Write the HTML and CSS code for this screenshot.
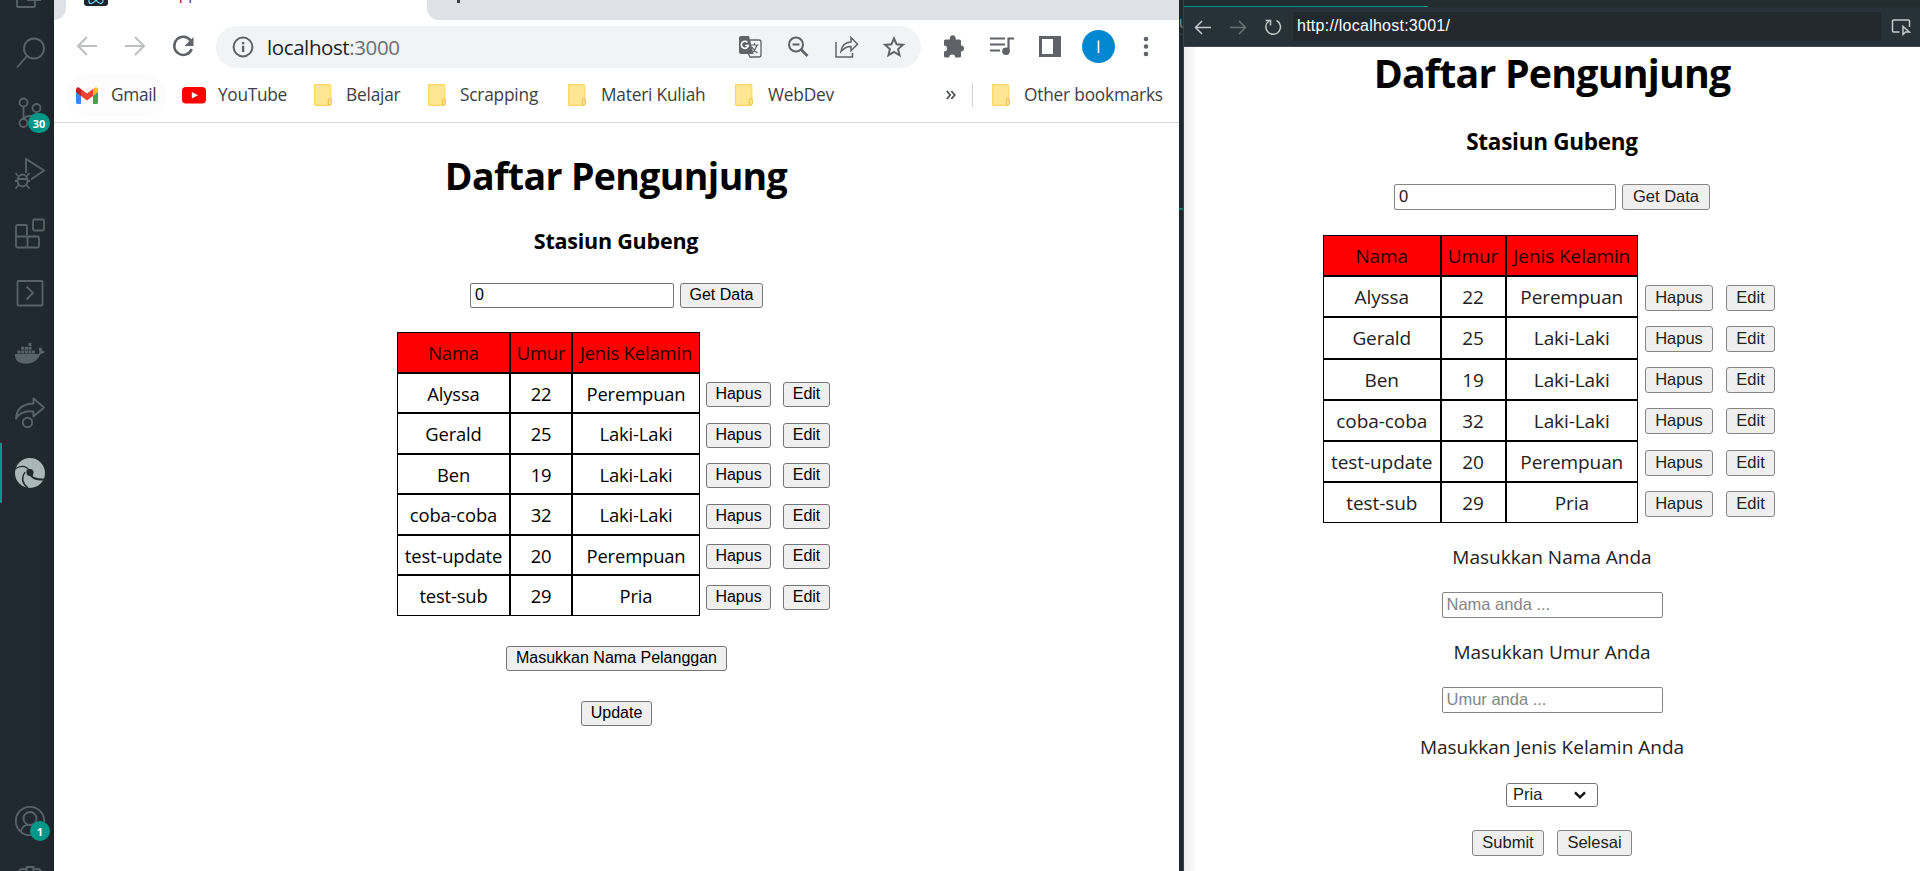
FILE: index.html
```
<!DOCTYPE html>
<html lang="id">
<head>
<meta charset="utf-8">
<title>Daftar Pengunjung</title>
<link rel="stylesheet" href="styles.css">
</head>
<body>
<svg class="defs" width="0" height="0">
  <symbol id="folder" viewBox="0 0 18 22">
    <path d="M1 .8h14.500a1.200 1.200 0 0 1 1.200 1.200V14H17.500v6.300a1 1 0 0 1-1 1H.7z" fill="#ffe693"/>
    <path d="M.6 21.200V.7H15.500q1.300 0 1.300 1.400V14M.6 21.300H16" fill="none" stroke="#ffd75e" stroke-width="1.200"/>
    <rect x="14.300" y="14.500" width="3" height="6.400" rx="1.300" fill="#ffe693" stroke="#e8bd3d"/>
  </symbol>
</svg>
<div class="desktop">
  <nav class="activity">
    <svg viewBox="0 0 54 60" class="slot files"><path d="M17 -10V6q0 1 1 1h16q1 0 1-1V0M27 0h14" fill="none" stroke="#566368" stroke-width="1.800"/></svg>
    <svg viewBox="0 0 54 60" class="slot"><g fill="none" stroke="#566368" stroke-width="1.900"><circle cx="34" cy="25.500" r="10"/><path d="M27 33L17 44.500"/></g></svg>
    <div class="slot">
      <svg viewBox="0 0 54 60"><g fill="none" stroke="#566368" stroke-width="1.800"><circle cx="23.500" cy="19.500" r="4"/><circle cx="23.500" cy="40" r="4"/><circle cx="36.500" cy="25" r="4"/><path d="M23.500 23.500V36M36.500 29q-.5 4-6 4-5.500 0-7 3"/></g></svg>
      <span class="badge badge-scm">30</span>
    </div>
    <svg viewBox="0 0 54 60" class="slot"><g fill="none" stroke="#566368" stroke-width="1.800"><path d="M26 30V16L44 27.500 31 36.500"/><ellipse cx="22.500" cy="37.500" rx="5" ry="6"/><path d="M17.500 36h10M18 33l-2.500-3M27 33l2.500-3M17.500 38H15M27.500 38H30M18.500 42l-3 3.500M26.500 42l3 3.500"/></g></svg>
    <svg viewBox="0 0 54 60" class="slot"><g transform="translate(0 6)" fill="none" stroke="#566368" stroke-width="1.800"><path d="M27 26V17.500q0-1.500-1.500-1.500h-8q-1.500 0-1.500 1.500V37q0 1.500 1.500 1.500h20q1.500 0 1.500-1.500V29q0-1.500-1.500-1.500H16M27.500 27v11"/><rect x="33" y="10.500" width="11" height="11" rx="1.500"/></g></svg>
    <svg viewBox="0 0 54 60" class="slot"><g transform="translate(0 5.500)" fill="none" stroke="#566368" stroke-width="1.800"><rect x="17.500" y="12.500" width="25" height="24.500" rx="1"/><path d="M26.500 18l6.500 6.500-6.500 6.500"/></g></svg>
    <svg viewBox="0 0 54 60" class="slot"><path transform="translate(0 6.500)" d="M15 24.500h23.500q1.500-1 0-6l2-.5q2 1 2 3.500 1.500-.2 2.500.8-1.500 2-4.500 2.200-4 9.500-14 9.700Q14.500 34.500 15 24.500zM17.500 21h3v3h-3zM21.200 21h3v3h-3zM24.900 21h3v3h-3zM28.500 21h3v3h-3zM32 21h3v3h-3zM21.200 17.300h3v3h-3zM24.900 17.300h3v3h-3zM28.500 17.300h3v3h-3zM28.500 13.500h3v3h-3z" fill="#566368"/></svg>
    <svg viewBox="0 0 54 60" class="slot"><g fill="none" stroke="#566368" stroke-width="1.900" stroke-linejoin="round"><path d="M16 35.500Q17 21 33.500 20.500V15.500L44 24.500 33.500 33.500V28.500Q21 27 16 35.500z"/><circle cx="27.500" cy="39.500" r="4.700"/></g></svg>
    <div class="slot active">
      <svg viewBox="0 0 54 60"><circle cx="30" cy="30" r="15" fill="#a9b7bb"/><path d="M26 27Q31 25 33 30 32 33 34 34 39 36 44.500 35.500L43 37.500Q34 38 30 33z" fill="#21292f"/><circle cx="30" cy="29.500" r="3.500" fill="#21292f"/><path d="M15 26Q24 20 30 28M25 29Q19 38 28 45" fill="none" stroke="#21292f" stroke-width="1.300"/></svg>
    </div>
    <div class="slot account">
      <svg viewBox="0 0 54 60"><g fill="none" stroke="#566368" stroke-width="1.800"><circle cx="30" cy="27" r="14.200"/><circle cx="30" cy="24.500" r="6.500"/><path d="M20.500 38q2-8 9.500-7 7-1 9.500 6"/></g></svg>
      <span class="badge badge-user">1</span>
    </div>
    <svg viewBox="0 0 54 18" class="gear"><path d="M18.500 5.500q2.500-4 5-3l3 .7V.5h7v2.700l3-.7q2.500-1 5 3" transform="translate(0 .5)" fill="none" stroke="#566368" stroke-width="2"/></svg>
  </nav>

  <section class="chrome">
    <div class="tabs">
      <div class="tab-prev"></div>
      <div class="tab-active">
        <svg class="favicon" width="24" height="6" viewBox="0 0 24 6"><path d="M0 0h24v3q0 3-3 3H3Q0 6 0 3z" fill="#20232a"/><path d="M5 0q-.5 3.500 2 3.500T12 0q3 4 5 3.500T19 0" fill="none" stroke="#61dafb" stroke-width="1.200"/></svg>
        <span class="tab-title">React App</span>
      </div>
      <div class="tab-rest"><span class="plus"></span></div>
    </div>
    <div class="toolbar">
      <svg class="nav-icons" width="162" height="54" viewBox="54 20 162 54"><g fill="none" stroke="#bdbfc1" stroke-width="2"><path d="M97 46H78M87 37l-9 9 9 9M125 46h19M135 37l9 9-9 9"/></g><path d="M190.500 40.500a9 9 0 1 0 1.200 8.500" fill="none" stroke="#5f6368" stroke-width="2.500"/><path d="M193.500 37v9h-9z" fill="#5f6368"/></svg>
      <div class="omnibox">
        <svg width="22" height="22" viewBox="0 0 22 22"><circle cx="11" cy="11" r="9.400" fill="none" stroke="#5f6368" stroke-width="2"/><path d="M9.900 9.800h2.400V16H9.900zM9.900 5.900h2.400v2.300H9.900z" fill="#5f6368"/></svg>
        <span class="url"><span class="host">localhost</span><span class="port">:3000</span></span>
        <svg class="box-icons" width="182" height="42" viewBox="739 26 182 42">
          <path d="M741 36h8l4.500 18H741q-2 0-2-2V38q0-2 2-2z" fill="#5f6368"/>
          <path d="M750 40h9q2 0 2 2v13q0 2-2 2h-9l-2-4" fill="none" stroke="#5f6368" stroke-width="1.300"/>
          <path d="M747.500 42.500a3.500 3.500 0 1 0 .8 3h-3" fill="none" stroke="#fff" stroke-width="1.600"/>
          <path d="M750.500 45h8M754.500 43v2M757 45q-1.500 5-5 7.500M752 47q2 4 5.500 6" fill="none" stroke="#5f6368" stroke-width="1.200"/>
          <g fill="none" stroke="#5f6368" stroke-width="2"><circle cx="796" cy="44.500" r="7"/><path d="M801 49.500l6.500 6.500" stroke-width="2.600"/><path d="M792.500 44.500h7"/></g>
          <g fill="none" stroke="#5f6368" stroke-width="1.500"><path d="M836 42v15h16.500v-4M841 51.500q1-9 10-9.500v-4.500l6.500 6.800-6.500 6.500v-4.300q-6 0-10 5z"/></g>
          <path d="M894 38.500l2.600 5.800 6.300.6-4.800 4.200 1.400 6.200-5.500-3.300-5.500 3.300 1.400-6.200-4.800-4.200 6.300-.6z" fill="none" stroke="#5f6368" stroke-width="2"/>
        </svg>
      </div>
      <svg class="right-icons" width="258" height="54" viewBox="921 20 258 54">
        <path d="M944 41q0-1.500 1.500-1.500h4.500a3 3 0 1 1 5.500 0h4q1.500 0 1.500 1.500v4.500a3 3 0 1 1 0 6V56q0 1.500-1.500 1.500h-4.300a3 3 0 0 0-6 0h-3.700q-1.500 0-1.500-1.500v-4.500a3 3 0 0 0 0-6z" fill="#5f6368"/>
        <g fill="none" stroke="#5f6368" stroke-width="2.200"><path d="M990 38.500h15M990 44.500h15M990 50.500h10M1008.500 51V38.500h5.500"/></g><circle cx="1006" cy="51.300" r="3.800" fill="#5f6368"/>
        <path d="M1039 36h22v21h-22zM1042 39v15h11V39z" fill="#5f6368" fill-rule="evenodd"/>
        <circle cx="1098.500" cy="46.500" r="16.500" fill="#0288d1"/><path d="M1098.500 40.500v12.500" stroke="#fff" stroke-width="1.600"/>
        <g fill="#5f6368"><circle cx="1146" cy="39" r="2.300"/><circle cx="1146" cy="46.500" r="2.300"/><circle cx="1146" cy="54" r="2.300"/></g>
      </svg>
    </div>
    <div class="bookmarks">
      <div class="bm gmail"><svg width="22" height="17" viewBox="0 0 22 17"><path d="M0 3l5 4v10H1.500Q0 17 0 15.500z" fill="#4285f4"/><path d="M22 3l-5 4v10h3.500q1.500 0 1.500-1.500z" fill="#34a853"/><path d="M17 2l2-1.500Q22-.5 22 3v2l-5 4z" fill="#fbbc04"/><path d="M5 2l6 4.500L17 2v7l-6 4.500L5 9z" fill="#ea4335"/><path d="M5 2L3 .5Q0-.5 0 3v2l5 4z" fill="#c5221f"/></svg><span>Gmail</span></div>
      <div class="bm yt"><svg width="24" height="17" viewBox="0 0 24 17"><rect width="24" height="16.500" rx="4" fill="#f00"/><path d="M9.800 5l6.200 3.300-6.200 3.300z" fill="#fff"/></svg><span>YouTube</span></div>
      <div class="bm b3"><svg width="18" height="22"><use href="#folder"/></svg><span>Belajar</span></div>
      <div class="bm b4"><svg width="18" height="22"><use href="#folder"/></svg><span>Scrapping</span></div>
      <div class="bm b5"><svg width="18" height="22"><use href="#folder"/></svg><span>Materi Kuliah</span></div>
      <div class="bm b6"><svg width="18" height="22"><use href="#folder"/></svg><span>WebDev</span></div>
      <span class="more"><svg width="10" height="10" viewBox="0 0 10 10"><path d="M.8 1l3.400 4-3.400 4M5.300 1l3.400 4-3.400 4" fill="none" stroke="#4d5156" stroke-width="1.800"/></svg></span>
      <div class="bm other"><svg width="18" height="22"><use href="#folder"/></svg><span>Other bookmarks</span></div>
    </div>
    <main class="page page-left">
      <h1>Daftar Pengunjung</h1>
      <h3>Stasiun Gubeng</h3>
      <div class="query"><div class="field">0</div><div class="btn">Get Data</div></div>
      <div class="grid">
        <div class="c h">Nama</div><div class="c h">Umur</div><div class="c h">Jenis Kelamin</div><i></i><i></i>
        <div class="c">Alyssa</div><div class="c">22</div><div class="c">Perempuan</div><div class="a"><div class="btn hapus">Hapus</div></div><div class="a"><div class="btn edit">Edit</div></div>
        <div class="c">Gerald</div><div class="c">25</div><div class="c">Laki-Laki</div><div class="a"><div class="btn hapus">Hapus</div></div><div class="a"><div class="btn edit">Edit</div></div>
        <div class="c">Ben</div><div class="c">19</div><div class="c">Laki-Laki</div><div class="a"><div class="btn hapus">Hapus</div></div><div class="a"><div class="btn edit">Edit</div></div>
        <div class="c">coba-coba</div><div class="c">32</div><div class="c">Laki-Laki</div><div class="a"><div class="btn hapus">Hapus</div></div><div class="a"><div class="btn edit">Edit</div></div>
        <div class="c">test-update</div><div class="c">20</div><div class="c">Perempuan</div><div class="a"><div class="btn hapus">Hapus</div></div><div class="a"><div class="btn edit">Edit</div></div>
        <div class="c">test-sub</div><div class="c">29</div><div class="c">Pria</div><div class="a"><div class="btn hapus">Hapus</div></div><div class="a"><div class="btn edit">Edit</div></div>
      </div>
      <div class="btn add">Masukkan Nama Pelanggan</div>
      <div class="btn update">Update</div>
    </main>
  </section>

  <div class="gutter"><span class="gutter-text">U</span><span class="gutter-rule"></span><span class="gutter-mark"></span></div>

  <section class="preview">
    <div class="preview-tabs"><div class="preview-tab"></div></div>
    <div class="preview-bar">
      <svg width="109" height="39" viewBox="1184 7 109 39"><g fill="none" stroke="#c5c9cb" stroke-width="1.500"><path d="M1211 27.500h-15M1202 21l-6.500 6.500 6.500 6.500"/><path d="M1230 27.500h15M1239 21l6.500 6.500-6.500 6.500" stroke="#697378"/><path d="M1276.500 20.500a7.300 7.300 0 1 1-7.500 0.500M1265.500 20.500h5v5"/></g></svg>
      <div class="address">http://localhost:3001/</div>
      <svg class="inspect" width="39" height="39" viewBox="1881 7 39 39"><g fill="none" stroke="#c5c9cb" stroke-width="1.500"><path d="M1899.500 32h-6q-1 0-1-1V21q0-1 1-1h15q1 0 1 1v6"/><path d="M1903 26.500v8l2.500-2.500h3.800z"/></g></svg>
    </div>
    <main class="page page-right">
      <h1>Daftar Pengunjung</h1>
      <h3>Stasiun Gubeng</h3>
      <div class="query"><div class="field">0</div><div class="btn">Get Data</div></div>
      <div class="grid">
        <div class="c h">Nama</div><div class="c h">Umur</div><div class="c h">Jenis Kelamin</div><i></i><i></i>
        <div class="c">Alyssa</div><div class="c">22</div><div class="c">Perempuan</div><div class="a"><div class="btn hapus">Hapus</div></div><div class="a"><div class="btn edit">Edit</div></div>
        <div class="c">Gerald</div><div class="c">25</div><div class="c">Laki-Laki</div><div class="a"><div class="btn hapus">Hapus</div></div><div class="a"><div class="btn edit">Edit</div></div>
        <div class="c">Ben</div><div class="c">19</div><div class="c">Laki-Laki</div><div class="a"><div class="btn hapus">Hapus</div></div><div class="a"><div class="btn edit">Edit</div></div>
        <div class="c">coba-coba</div><div class="c">32</div><div class="c">Laki-Laki</div><div class="a"><div class="btn hapus">Hapus</div></div><div class="a"><div class="btn edit">Edit</div></div>
        <div class="c">test-update</div><div class="c">20</div><div class="c">Perempuan</div><div class="a"><div class="btn hapus">Hapus</div></div><div class="a"><div class="btn edit">Edit</div></div>
        <div class="c">test-sub</div><div class="c">29</div><div class="c">Pria</div><div class="a"><div class="btn hapus">Hapus</div></div><div class="a"><div class="btn edit">Edit</div></div>
      </div>
      <div class="form">
        <p>Masukkan Nama Anda</p>
        <div class="field hint">Nama anda ...</div>
        <p>Masukkan Umur Anda</p>
        <div class="field hint">Umur anda ...</div>
        <p>Masukkan Jenis Kelamin Anda</p>
        <div class="select"><span>Pria</span><svg width="12" height="8" viewBox="0 0 12 8"><path d="M1 1.300l5 5 5-5" fill="none" stroke="#111" stroke-width="2.400"/></svg></div>
        <div class="actions"><div class="btn submit">Submit</div><div class="btn done">Selesai</div></div>
      </div>
    </main>
  </section>
</div>
</body>
</html>
```
FILE: styles.css
```
* { box-sizing: border-box; }
body { margin: 0; font-family: "Open Sans", "Noto Sans", sans-serif; color: #000; overflow: hidden; }
svg { display: block; flex: none; }
.defs { position: absolute; }
.desktop { display: flex; width: 1920px; height: 871px; overflow: hidden; white-space: nowrap; background: #21292f; }

/* editor activity bar */
.activity { width: 54px; display: flex; flex-direction: column; background: linear-gradient(90deg, #212930 46px, #1b2326); }
.slot { width: 54px; height: 60px; flex: none; position: relative; }
.activity svg.files { margin-bottom: -37px; }
.active { border-left: 2px solid #009688; }
.active svg { margin-left: -2px; }
.account { margin-top: 291px; }
.badge { position: absolute; display: flex; align-items: center; justify-content: center; height: 20px; border-radius: 10px; background: #009688; color: #fff; font-size: 11px; font-weight: 700; }
.badge-scm { left: 28px; top: 30px; width: 22px; }
.badge-user { left: 30px; top: 27px; width: 20px; }
.gear { width: 54px; height: 18px; margin-top: 12px; }

/* browser window */
.chrome { width: 1125px; background: #fff; display: flex; flex-direction: column; }
.tabs { height: 20px; display: flex; overflow: hidden; }
.tab-prev { width: 12px; background: #dee1e6; border-bottom-right-radius: 12px; }
.tab-active { width: 361px; display: flex; }
.favicon { margin-left: 18px; }
.tab-title { margin-left: 17px; margin-top: -17px; font-size: 15.500px; line-height: 20px; color: #3c4043; }
.tab-rest { flex: 1; background: #dee1e6; border-bottom-left-radius: 12px; }
.plus { display: block; width: 3px; height: 3px; margin-left: 30px; background: #3c4043; }
.toolbar { height: 54px; display: flex; align-items: flex-start; }
.omnibox { width: 705px; height: 42px; margin-top: 6px; border-radius: 21px; background: #f1f3f4; display: flex; align-items: center; padding-left: 16px; }
.url { margin-left: 13px; font-size: 20.500px; letter-spacing: -.4px; color: #202124; line-height: 28px; }
.port { color: #6b6f74; }
.box-icons { margin-left: auto; }
.bookmarks { height: 49px; border-bottom: 1px solid #d7d9dc; display: grid; grid-template-columns: 116px 132px 114px 140px 167px 200px 38px 1fr; padding-left: 12px; align-items: center; }
.bm { display: flex; align-items: center; gap: 14px; height: 42px; margin-top: -6px; font-size: 17.300px; letter-spacing: -.2px; color: #3c4043; }
.bm span { margin-top: -1px; }
.bm.gmail { width: 100px; padding-left: 10px; gap: 13px; border-radius: 21px; background: #fcfcfc; letter-spacing: -.3px; }
.bm.yt { gap: 12px; letter-spacing: -.3px; }
.bm.b5 { gap: 15px; }
.bm.b6 { gap: 15px; }
.more { margin-top: -6px; padding-left: 11px; height: 24px; border-right: 1px solid #cfd1d4; display: flex; align-items: center; }
.bm.other { padding-left: 19px; }

/* visitor list, shared by both windows */
.page { font-size: var(--text); display: flex; flex-direction: column; }
h1, h3, p { margin: 0; text-align: center; font-weight: 700; }
.query { display: flex; }
.btn, .field, .select { font-family: "Liberation Sans", Arial, sans-serif; font-size: var(--ctl); display: flex; align-items: center; border: 1px solid #767676; border-radius: 3px; height: var(--ctl-h); padding-bottom: 1px; }
.btn { justify-content: center; background: #efefef; }
.field { background: #fff; padding-left: 4px; border-radius: 2px; }
.c { border: 1px solid #000; display: flex; align-items: center; justify-content: center; padding-top: 1px; letter-spacing: var(--track); }
.h { background: #f00; color: #200; }
.grid { display: grid; }
.a { display: flex; align-items: center; padding-top: 4px; }

.page-left { --text: 18.400px; --ctl: 16px; --ctl-h: 25px; --track: -.15px; padding-top: 26px; }
.page-left h1 { font-size: 37.500px; line-height: 54px; letter-spacing: -.65px; margin-right: 1px; }
.page-left h3 { font-size: 21.500px; line-height: 30px; margin-top: 23px; letter-spacing: -.22px; margin-right: 1px; }
.page-left .query { margin: 27px 0 0 416px; gap: 6px; }
.page-left .query .field { width: 204px; }
.page-left .query .btn { width: 83px; }
.page-left .grid { margin: 24px 0 0 343px; grid-template-columns: 113px 62px 128px 77px 60px; grid-template-rows: repeat(7, 40.500px); }
.page-left .a { padding-left: 6px; }
.page-left .hapus { width: 65px; }
.page-left .edit { width: 47px; }
.add { width: 221px; margin: 30px 0 0 452px; }
.update { width: 71px; margin: 30px 0 0 527px; }

.gutter { width: 5px; background: #20282d; border-right: 1px solid #3a4246; overflow: hidden; display: flex; flex-direction: column; }
.gutter-text { height: 34px; padding-top: 14px; font-size: 13px; color: #8b9699; line-height: 18px; }
.gutter-rule { height: 1px; background: #39434a; }
.gutter-mark { height: 2px; margin-top: 173px; background: #00796b; }

/* embedded browser preview */
.preview { width: 736px; background: #fff; display: flex; flex-direction: column; }
.preview-tabs { height: 7px; background: #232c31; }
.preview-tab { width: 244px; height: 7px; border-bottom: 1px solid #009688; }
.preview-bar { height: 40px; display: flex; background: #263238; border-bottom: 1px solid #3f484d; }
.address { width: 588px; height: 29px; margin-top: 5px; padding-left: 4px; background: #21282e; color: #fff; font: 16px/28px "Liberation Sans", Arial, sans-serif; letter-spacing: .25px; }
.page-right { --text: 19px; --ctl: 16.500px; --ctl-h: 26px; --track: -.08px; flex: 1; color: #222; background: linear-gradient(90deg, #ededed, #fff 14px); }
.page-right h1 { font-size: 39.300px; line-height: 52px; letter-spacing: -.8px; color: #000; }
.page-right h3 { font-size: 22.500px; line-height: 30px; margin-top: 28px; letter-spacing: -.27px; color: #000; }
.page-right .btn, .page-right .field { border-color: #858585; }
.page-right .query { margin: 27px 0 0 210px; gap: 6px; }
.page-right .query .field { width: 222px; }
.page-right .query .btn { width: 88px; }
.page-right .grid { margin: 25px 0 0 139px; grid-template-columns: 117.500px 65px 132.500px 81px 60px; grid-template-rows: repeat(7, 41.200px); }
.page-right .a { padding-left: 7px; padding-top: 2px; }
.page-right .hapus { width: 68px; }
.page-right .edit { width: 49px; }
.form { display: flex; flex-direction: column; align-items: center; width: 736px; }
.form p { font-weight: 400; line-height: 26px; margin-top: 21px; }
.form .field { width: 221px; margin-top: 22px; color: #858585; }
.form .hint + p { margin-top: 21px; }
.select { width: 92px; margin-top: 23px; padding-left: 6px; justify-content: space-between; padding-right: 11px; }
.page-right .select { height: 24px; }
.actions { display: flex; gap: 13px; margin-top: 23px; }
.submit { width: 72px; }
.done { width: 75px; }
```
